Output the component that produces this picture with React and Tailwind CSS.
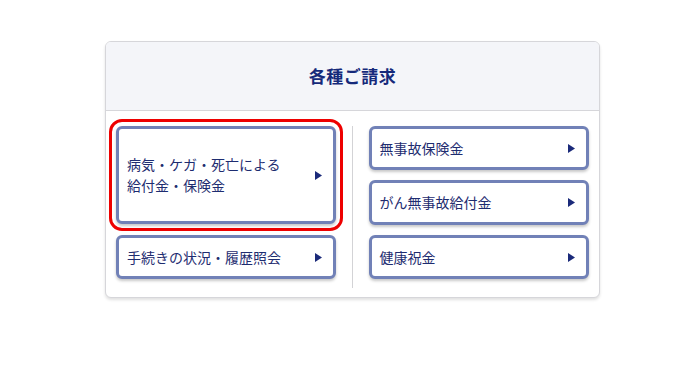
import React from 'react';

const Arrow = () => (
  <svg width="7" height="9" viewBox="0 0 7 9" className="shrink-0">
    <polygon points="0,0 7,4.5 0,9" fill="#1b2a7a" />
  </svg>
);

// ボタン1つ分
const ClaimButton = ({ children, className = '' }) => (
  <a
    href="#"
    className={`flex items-center justify-between rounded-[6px] border-[3px] border-[#7181b7] bg-white pl-[8px] pr-[11px] text-[14px] leading-[21px] text-[#1e2c70] shadow-[0_2px_3px_rgba(0,0,0,0.22)] ${className}`}
  >
    <span>{children}</span>
    <Arrow />
  </a>
);

export default function App() {
  return (
    <div
      className="min-h-[365px] bg-white pt-[41px] pl-[105px]"
      style={{ fontFamily: '"Noto Sans CJK JP", "Noto Sans", sans-serif' }}
    >
      <div className="w-[495px] overflow-hidden rounded-[6px] border border-[#d6d6da] bg-white shadow-[0_2px_3px_rgba(0,0,0,0.12)]">
        {/* タイトル */}
        <div className="flex h-[69px] items-center justify-center border-b border-[#d6d6da] bg-[#f4f5f9]">
          <h2 className="text-[17px] font-bold tracking-[0.5px] text-[#15297a]">各種ご請求</h2>
        </div>

        {/* 本体 */}
        <div className="flex pt-[15px] pb-[9px] pl-[10px] pr-[10px]">
          <div className="flex w-[220px] flex-col gap-[11px] pb-[9px]">
            <ClaimButton className="h-[98px] outline-[3px] outline-offset-[4px] outline-[#ee0000] outline-solid rounded-[6px]">
              病気・ケガ・死亡による
              <br />
              給付金・保険金
            </ClaimButton>
            <ClaimButton className="h-[44px]">手続きの状況・履歴照会</ClaimButton>
          </div>

          <div className="mx-[16px] w-px bg-[#d3d3d6]" />

          <div className="flex w-[221px] flex-col gap-[10px] pb-[9px]">
            <ClaimButton className="h-[44px]">無事故保険金</ClaimButton>
            <ClaimButton className="h-[45px]">がん無事故給付金</ClaimButton>
            <ClaimButton className="h-[44px]">健康祝金</ClaimButton>
          </div>
        </div>
      </div>
    </div>
  );
}
